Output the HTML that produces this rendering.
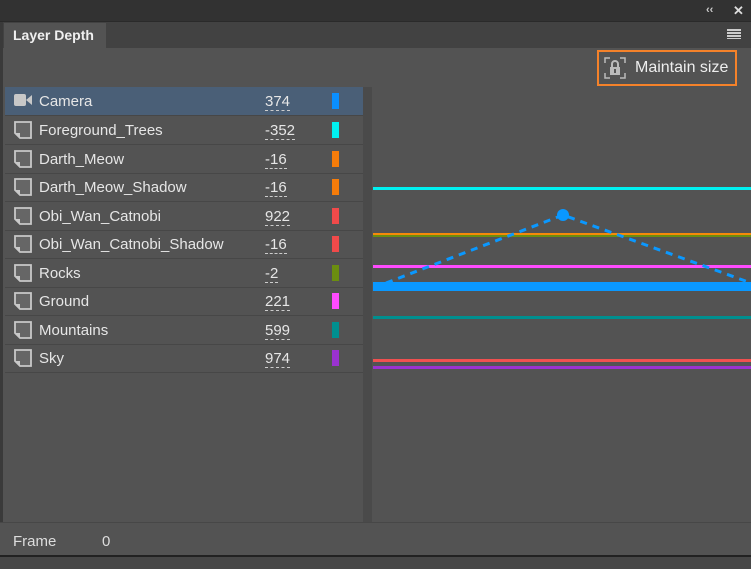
<!DOCTYPE html>
<html><head><style>
body{margin:0;width:751px;height:569px;overflow:hidden;background:#535353;font-family:"Liberation Sans",sans-serif;position:relative}
.a{position:absolute}
.row{position:absolute;left:5px;width:358px;height:28px;border-bottom:1px solid #474747;color:#e6e6e6;font-size:15px}
.row .n{position:absolute;left:34px;top:6px}
.row .v{position:absolute;left:260px;top:6px;border-bottom:1px dashed #ccc;line-height:17px}
.row .c{position:absolute;left:327px;top:6px;width:7px;height:16px}
.row svg{position:absolute;left:9px;top:5px}
.hl{position:absolute;left:373px;width:378px}
</style></head><body>
<div class="a" style="left:0;top:0;width:751px;height:21px;background:#323232"></div>
<div class="a" style="left:706px;top:4px;color:#ccc;font-size:11px;font-weight:bold">‹‹</div>
<div class="a" style="left:733px;top:3px;color:#ddd;font-size:13px;font-weight:bold">✕</div>
<div class="a" style="left:0;top:21px;width:751px;height:26px;background:#424242;border-top:1px solid #2a2a2a"></div>
<div class="a" style="left:4px;top:23px;width:102px;height:25px;background:#535353;color:#f0f0f0;font-weight:bold;font-size:14px;line-height:24px;padding-left:9px;box-sizing:border-box">Layer Depth</div>
<div class="a" style="left:727px;top:29px;width:14px;height:10px;background:repeating-linear-gradient(#ccc 0 2px,transparent 2px 3px)"></div>
<div class="a" style="left:0;top:22px;width:3px;height:547px;background:#3a3a3a"></div>
<div class="a" style="left:597px;top:50px;width:140px;height:36px;border:2px solid #f5822a;box-sizing:border-box;color:#eee;font-size:16px">
<svg class="a" style="left:5px;top:5px" width="22" height="22" viewBox="0 0 22 22"><path d="M1 6V1h5M16 1h5v5M21 16v5h-5M6 21H1v-5" stroke="#bbb" fill="none" stroke-width="1.5"/><rect x="6" y="10" width="10" height="8" fill="#bbb"/><path d="M8 10V7a3 3 0 0 1 6 0v3" stroke="#bbb" fill="none" stroke-width="2"/><rect x="10" y="12" width="2" height="4" fill="#555"/></svg>
<span class="a" style="left:36px;top:7px">Maintain size</span></div>
<div class="a" style="left:363px;top:87px;width:9px;height:435px;background:#4a4a4a"></div>
<div class="a" style="left:5px;top:87px;width:358px;height:435px;background:#535353;border-bottom:1px solid #474747"></div>
<div class="row" style="top:87px;background:#4a5f77"><svg width="20" height="16" viewBox="0 0 20 16"><rect x="0" y="2" width="12" height="12" rx="2" fill="#c8c8c8"/><path d="M12 8l6-5v10z" fill="#c8c8c8"/></svg><span class="n">Camera</span><span class="v">374</span><span class="c" style="background:#0a8fff"></span></div>
<div id="rows"></div>
<div class="a" style="left:0;top:522px;width:751px;height:34px;background:#535353;border-top:1px solid #474747"></div>
<div class="a" style="left:13px;top:533px;color:#ddd;font-size:15px">Frame</div>
<div class="a" style="left:102px;top:533px;color:#ddd;font-size:15px">0</div>
<div class="a" style="left:0;top:555px;width:751px;height:2px;background:#222"></div>
<div class="a" style="left:0;top:557px;width:751px;height:12px;background:#474747"></div>
<div class="hl" style="top:187px;height:3px;background:#00f0f0"></div>
<div class="hl" style="top:233px;height:2px;background:#f58a0a"></div>
<div class="hl" style="top:235px;height:2px;background:#6b8e10"></div>
<div class="hl" style="top:265px;height:3px;background:#ff4bff"></div>
<div class="hl" style="top:282px;height:9px;background:#0a98ff"></div>
<div class="hl" style="top:316px;height:3px;background:#008f8f"></div>
<div class="hl" style="top:359px;height:3px;background:#f05050"></div>
<div class="hl" style="top:366px;height:3px;background:#9a32d0"></div>
<svg class="a" style="left:0;top:0" width="751" height="569"><path d="M386 283L563 215L751 283" stroke="#0a98ff" stroke-width="3" fill="none" stroke-dasharray="7 6"/><circle cx="563" cy="215" r="6" fill="#0a98ff"/></svg>
<script>
var d=[["Foreground_Trees","-352","#00f0f0"],["Darth_Meow","-16","#f57c0a"],["Darth_Meow_Shadow","-16","#f57c0a"],["Obi_Wan_Catnobi","922","#f04a4a"],["Obi_Wan_Catnobi_Shadow","-16","#f04a4a"],["Rocks","-2","#6b8e10"],["Ground","221","#ff4bff"],["Mountains","599","#008f8f"],["Sky","974","#9a32d0"]];
var h="";d.forEach(function(r,i){var t=Math.round(116+i*28.5);h+='<div class="row" style="top:'+t+'px"><svg width="18" height="18" viewBox="0 0 18 18"><path d="M1 1h16v16H6L1 12z" fill="#666" stroke="#c8c8c8" stroke-width="1.8"/><path d="M1 12h5v5z" fill="#c8c8c8"/></svg><span class="n">'+r[0]+'</span><span class="v">'+r[1]+'</span><span class="c" style="background:'+r[2]+'"></span></div>'});
document.getElementById("rows").innerHTML=h;
</script>
</body></html>
